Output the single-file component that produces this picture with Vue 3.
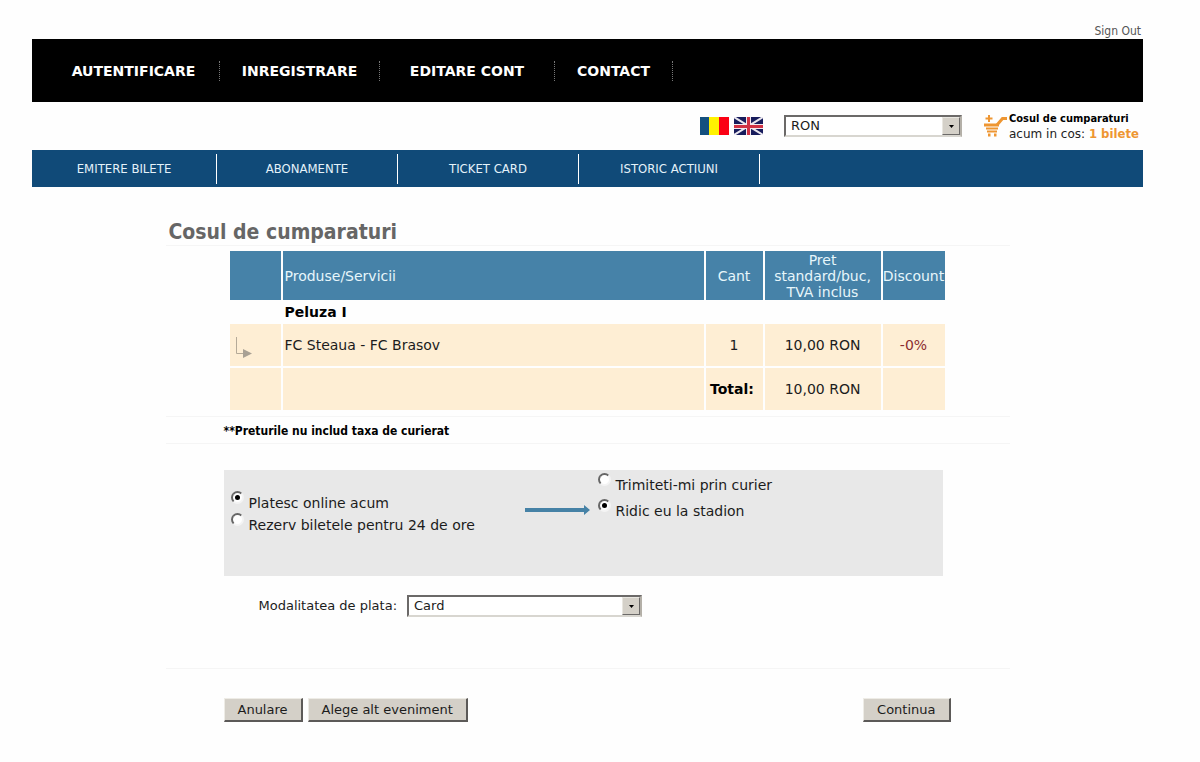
<script setup>
import { ref } from 'vue'

const accountLinks = ['AUTENTIFICARE', 'INREGISTRARE', 'EDITARE CONT', 'CONTACT']
const sectionLinks = ['EMITERE BILETE', 'ABONAMENTE', 'TICKET CARD', 'ISTORIC ACTIUNI']

const currency = ref('RON')
const payment = ref('online')
const delivery = ref('stadion')
const method = ref('Card')
</script>

<template>
  <div class="page">
    <div class="session"><a href="#">Sign Out</a></div>

    <nav class="account" aria-label="Cont">
      <a v-for="label in accountLinks" :key="label" href="#">{{ label }}</a>
    </nav>

    <div class="tools">
      <a href="#" class="flag" aria-label="Romana">
        <svg width="29" height="18" viewBox="0 0 29 18">
          <rect width="10" height="18" fill="#14507f" />
          <rect x="9" width="11" height="18" fill="#fff200" />
          <rect x="19" width="10" height="18" fill="#fb0014" />
        </svg>
      </a>
      <a href="#" class="flag" aria-label="English">
        <svg width="29" height="18" viewBox="0 0 29 18">
          <rect width="29" height="18" fill="#171c5c" />
          <path d="M0 0L29 18M29 0L0 18" stroke="#e9e6ee" stroke-width="2" />
          <path d="M14.500 0V18M0 9.500H29" stroke="#f3e9ee" stroke-width="5" />
          <path d="M14.500 0V18M0 9.500H29" stroke="#cf3143" stroke-width="3" />
        </svg>
      </a>
      <div class="select currency">
        <select v-model="currency" aria-label="Moneda">
          <option>RON</option>
          <option>EUR</option>
        </select>
        <span class="arrow"><svg width="5" height="3" viewBox="0 0 5 3"><path d="M0 0H5L2.500 3Z" /></svg></span>
      </div>
      <a href="#" class="cart">
        <svg width="23" height="22" viewBox="0 0 23 22" fill="none" stroke="#ee9632">
          <path d="M5 0V7M1.500 3.500H8.500" stroke-width="2" />
          <path d="M23 3.500H18.500L13 10" stroke-width="3" />
          <path d="M0 10H15" stroke-width="3" />
          <path d="M2 13.500H14M3 16.500H13" stroke-width="2" />
          <path d="M4 20H6.500M10 20H12.500" stroke-width="3" />
        </svg>
        <span class="cart-text">
          <b>Cosul de cumparaturi</b>
          <span>acum in cos: <strong>1 bilete</strong></span>
        </span>
      </a>
    </div>

    <nav class="sections" aria-label="Sectiuni">
      <a v-for="label in sectionLinks" :key="label" href="#">{{ label }}</a>
    </nav>

    <main class="content">
      <h1>Cosul de cumparaturi</h1>

      <div class="order">
        <table>
          <colgroup>
            <col class="c-mark"><col><col class="c-qty"><col class="c-price"><col class="c-disc">
          </colgroup>
          <thead>
            <tr>
              <th></th>
              <th class="name">Produse/Servicii</th>
              <th>Cant</th>
              <th>Pret standard/buc, TVA inclus</th>
              <th>Discount</th>
            </tr>
          </thead>
          <tbody>
            <tr class="group">
              <td></td>
              <td class="name" colspan="4">Peluza I</td>
            </tr>
            <tr class="line">
              <td class="mark">
                <svg width="16" height="22" viewBox="0 0 16 22">
                  <path d="M.500 0V16.500H7" fill="none" stroke="#b5aa98" />
                  <path d="M7 12L16 16.500L7 21Z" fill="#a9a194" />
                </svg>
              </td>
              <td class="name">FC Steaua - FC Brasov</td>
              <td>1</td>
              <td>10,00 RON</td>
              <td class="discount">-0%</td>
            </tr>
            <tr class="line">
              <td></td>
              <td></td>
              <td class="total">Total:</td>
              <td>10,00 RON</td>
              <td></td>
            </tr>
          </tbody>
        </table>
      </div>

      <p class="note">**Preturile nu includ taxa de curierat</p>

      <form class="checkout" @submit.prevent>
        <div class="options">
          <div class="choices pay">
            <label><input v-model="payment" type="radio" name="payment" value="online"><span>Platesc online acum</span></label>
            <label><input v-model="payment" type="radio" name="payment" value="rezerv"><span>Rezerv biletele pentru 24 de ore</span></label>
          </div>
          <svg class="pointer" width="65" height="12" viewBox="0 0 65 12" fill="#4682a6">
            <path d="M0 4H59V1L65 6L59 11V8H0Z" />
          </svg>
          <div class="choices ship">
            <label><input v-model="delivery" type="radio" name="delivery" value="curier"><span>Trimiteti-mi prin curier</span></label>
            <label><input v-model="delivery" type="radio" name="delivery" value="stadion"><span>Ridic eu la stadion</span></label>
          </div>
        </div>

        <div class="method">
          <label for="method">Modalitatea de plata:</label>
          <div class="select pay-method">
            <select id="method" v-model="method">
              <option>Card</option>
              <option>Transfer bancar</option>
            </select>
            <span class="arrow"><svg width="5" height="3" viewBox="0 0 5 3"><path d="M0 0H5L2.500 3Z" /></svg></span>
          </div>
        </div>

        <div class="actions">
          <button type="button">Anulare</button>
          <button type="button">Alege alt eveniment</button>
          <button type="submit" class="next">Continua</button>
        </div>
      </form>
    </main>
  </div>
</template>

<style>
body {
  background: #fefefe;
}
</style>

<style scoped>
.page {
  padding: 23px 57px 40px 32px;
  font: 13px/16px "DejaVu Sans", Verdana, sans-serif;
  color: #1c1c1c;
}
.page *,
.page *::before {
  box-sizing: border-box;
}
a {
  color: inherit;
  text-decoration: none;
}
svg {
  display: block;
}

.session {
  padding-right: 2px;
  text-align: right;
  font: 12px/16px "DejaVu Sans Condensed", Tahoma, sans-serif;
  color: #555;
}

.account {
  display: flex;
  align-items: center;
  height: 63px;
  background: #000;
  color: #fff;
  font-size: 14px;
  font-weight: bold;
}
.account a {
  width: 160px;
  line-height: 20px;
  text-align: center;
  border-right: 1px dotted #777;
}
.account a:first-child {
  width: 188px;
  padding-left: 16px;
}
.account a:nth-child(3) {
  width: 175px;
}
.account a:last-child {
  width: 118px;
}

.tools {
  display: flex;
  align-items: center;
  justify-content: flex-end;
  height: 48px;
}
.flag {
  margin-right: 5px;
}
.flag + .select {
  margin: 0 22px 0 16px;
}
.cart {
  display: flex;
  align-items: center;
  color: #222;
}
.cart-text {
  display: flex;
  flex-direction: column;
  width: 136px;
  padding-left: 2px;
  font-size: 12px;
  line-height: 15px;
  white-space: nowrap;
}
.cart-text b {
  color: #000;
  font: bold 11px/15px "DejaVu Sans Condensed", Tahoma, sans-serif;
}
.cart-text strong {
  color: #ee9632;
  font: bold 13px/15px "DejaVu Sans Condensed", Tahoma, sans-serif;
}

.select {
  position: relative;
  height: 22px;
}
.currency {
  width: 178px;
}
.pay-method {
  width: 235px;
}
select {
  appearance: none;
  width: 100%;
  height: 100%;
  padding: 0 24px 0 5px;
  border: 2px solid;
  border-color: #6b6968 #b4b0a8 #d8d6d0 #6b6968;
  border-radius: 0;
  background: #fff;
  color: #1c1c1c;
  font: inherit;
}
.arrow {
  position: absolute;
  top: 2px;
  right: 2px;
  bottom: 2px;
  display: grid;
  place-items: center;
  width: 18px;
  border: 1px solid;
  border-color: #e8e6e0 #6b6968 #6b6968 #e8e6e0;
  background: #d4d0c8;
  pointer-events: none;
}

.sections {
  display: flex;
  align-items: center;
  height: 37px;
  background: #104a78;
  color: #e4f2fa;
  font: 13px/30px "DejaVu Sans Condensed", Tahoma, sans-serif;
}
.sections a {
  width: 181px;
  text-align: center;
  border-right: 1px solid #fff;
}
.sections a:first-child {
  width: 185px;
}

.content {
  max-width: 844px;
  margin: 0 auto;
  padding-top: 32px;
}
h1 {
  margin: 0;
  padding-left: 3px;
  border-bottom: 1px solid #f5f5f5;
  color: #666;
  font: bold 21px/26px "DejaVu Sans Condensed", Tahoma, sans-serif;
}
.order {
  padding: 3px 63px 4px 62px;
}
table {
  width: 100%;
  table-layout: fixed;
  border-spacing: 2px;
  font-size: 14px;
}
.c-mark {
  width: 51px;
}
.c-qty {
  width: 57px;
}
.c-price {
  width: 116px;
}
.c-disc {
  width: 62px;
}
th,
td {
  padding: 0;
  text-align: center;
}
th {
  height: 49px;
  background: #4682a8;
  color: #e6f6fb;
  font-weight: normal;
}
.name {
  padding-left: 2px;
  text-align: left;
}
.group td {
  height: 20px;
  color: #000;
  font-weight: bold;
}
.line td {
  height: 42px;
  background: #feeed4;
}
.line .mark {
  padding: 6px 0 0 6px;
}
.line .discount {
  color: #8c2c30;
}
.line .total {
  padding-right: 4px;
  color: #000;
  font-weight: bold;
}
.note {
  margin: 0;
  padding: 6px 58px 4px;
  border: solid #f5f5f5;
  border-width: 1px 0;
  color: #000;
  font: bold 12px/16px "DejaVu Sans Condensed", Tahoma, sans-serif;
}

.options {
  display: flex;
  align-items: flex-start;
  height: 106px;
  margin: 26px 67px 0 58px;
  padding-left: 7px;
  background: #e8e8e8;
  font-size: 14px;
}
.choices label {
  display: flex;
  align-items: flex-start;
}
.choices span {
  padding: 4px 0 0 5px;
}
.pay {
  flex: 0 0 294px;
  padding-top: 21px;
}
.pay label {
  height: 22px;
}
.ship {
  padding: 3px 0 0 8px;
}
.ship label {
  height: 26px;
}
.pointer {
  flex: none;
  margin-top: 34px;
}
input[type="radio"] {
  appearance: none;
  display: grid;
  place-items: center;
  width: 13px;
  height: 13px;
  margin: 0;
  border: 2px solid;
  border-color: #666 #f4f4f4 #f4f4f4 #666;
  border-radius: 50%;
  background: #fff;
}
input[type="radio"]:checked::before {
  content: "";
  width: 5px;
  height: 5px;
  border-radius: 50%;
  background: #000;
}

.method {
  display: flex;
  align-items: center;
  gap: 10px;
  padding: 19px 0 51px 93px;
  border-bottom: 1px solid #f5f5f5;
}
.actions {
  display: flex;
  gap: 5px;
  padding: 29px 59px 0 58px;
}
button {
  height: 24px;
  padding: 0 13px;
  border: solid;
  border-width: 1px 2px 2px 1px;
  border-color: #eeece6 #5c5a58 #5c5a58 #eeece6;
  border-radius: 0;
  background: #d4d0c8;
  color: #1c1c1c;
  font: inherit;
}
.next {
  margin-left: auto;
}
</style>
